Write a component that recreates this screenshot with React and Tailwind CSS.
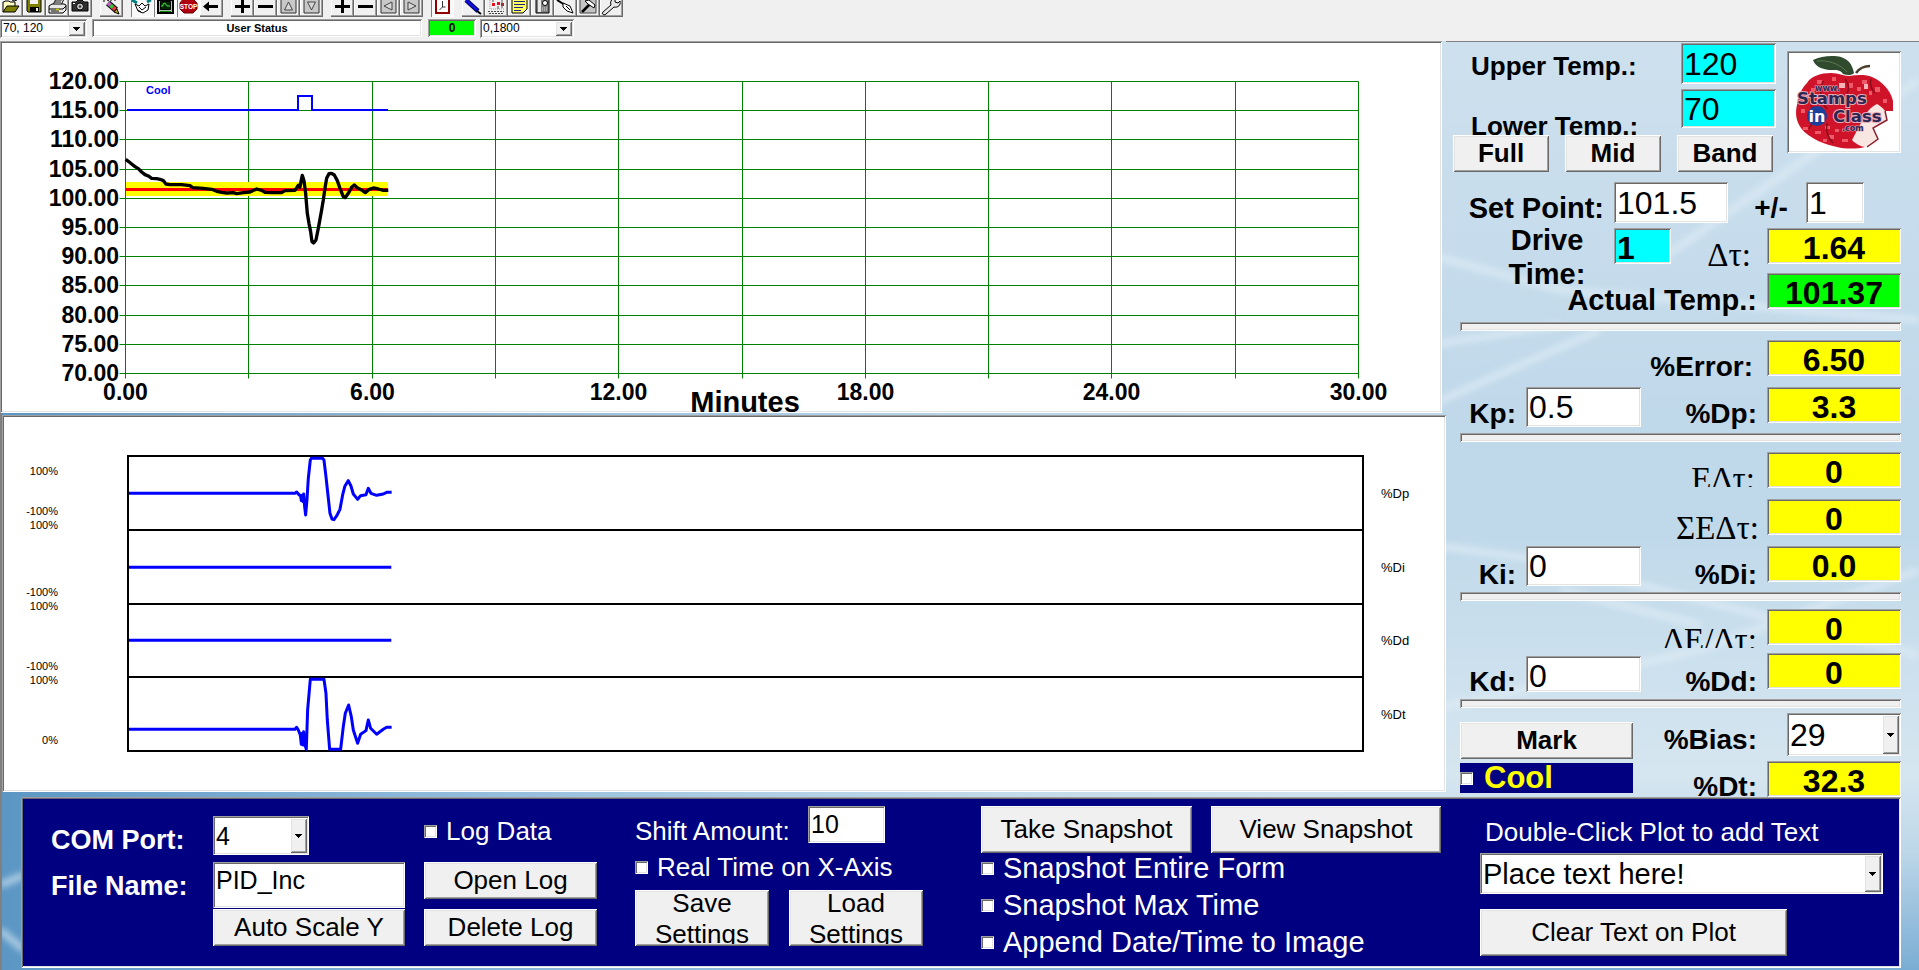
import React from "react";

const SUNKEN =
  "shadow-[inset_1px_1px_0_#a0a0a0,inset_-1px_-1px_0_#ffffff,inset_2px_2px_0_#696969,inset_-2px_-2px_0_#e3e3e3]";
const RAISED =
  "shadow-[inset_1px_1px_0_#ffffff,inset_-1px_-1px_0_#696969,inset_2px_2px_0_#e3e3e3,inset_-2px_-2px_0_#a0a0a0]";

/* ---------- basic controls ---------- */

function Button({ className = "", children }) {
  return (
    <button type="button" className={`bg-[#f0f0f0] text-black text-center overflow-hidden ${RAISED} ${className}`}>
      {children}
    </button>
  );
}

function TextBox({ id, value, label, className = "" }) {
  return (
    <input
      id={id}
      type="text"
      aria-label={label}
      defaultValue={value}
      className={`min-w-0 rounded-none px-[3px] text-black outline-none ${SUNKEN} ${className}`}
    />
  );
}

function Combo({ id, label, value, className = "", textClass = "", arrowClass = "w-[17px]" }) {
  return (
    <div className={`relative flex bg-white p-[2px] ${SUNKEN} ${className}`}>
      <select
        id={id}
        aria-label={label}
        defaultValue={value}
        className={`w-full appearance-none bg-transparent pl-[1px] text-black outline-none ${textClass}`}
      >
        <option>{value}</option>
      </select>
      <span
        className={`pointer-events-none absolute inset-y-[2px] right-[2px] flex items-center justify-center bg-[#f0f0f0] ${RAISED} ${arrowClass}`}
      >
        <svg viewBox="0 0 7 4" className="h-1 w-[7px]" shapeRendering="crispEdges">
          <path d="M0 0h7v1h-1v1h-1v1h-1v1h-1v-1h-1v-1h-1v-1h-1z" />
        </svg>
      </span>
    </div>
  );
}

function Check({ id, children, className = "" }) {
  return (
    <label htmlFor={id} className={`flex items-center gap-[9px] whitespace-nowrap ${className}`}>
      <input id={id} type="checkbox" className={`h-[13px] w-[13px] shrink-0 appearance-none bg-white ${SUNKEN}`} />
      {children}
    </label>
  );
}

function Readout({ id, color = "bg-[#ffff00]", children }) {
  return (
    <output
      id={id}
      className={`flex h-9 w-[134px] shrink-0 items-center justify-center pt-1 text-[32px] leading-8 font-bold ${color} ${SUNKEN}`}
    >
      {children}
    </output>
  );
}

function Divider() {
  return <div className={`mr-[18px] ml-[14px] h-[9px] bg-[#f0f0f0] ${SUNKEN}`} />;
}

/* ---------- toolbar ---------- */

const ICONS = {
  open: (
    <>
      <path d="M3 12V2h1l1-1h4l1 1h5v4" fill="#ffffc0" stroke="#000" />
      <path d="M3 12l4-6h12l-4 6z" fill="#808000" stroke="#000" />
      <path d="M12 0l2 1 3-1" fill="none" stroke="#000" />
    </>
  ),
  save: (
    <>
      <path d="M4 -2h14v14H5l-1-1z" fill="#808000" stroke="#000" />
      <path d="M7 -1h8v5H7z" fill="#f0f0f0" />
      <path d="M7 7h9v5H7z" fill="#000" />
      <path d="M13 8h2v3h-2z" fill="#f0f0f0" />
    </>
  ),
  print: (
    <>
      <path d="M7 5l3-6h8l-3 6" fill="#fff" stroke="#000" />
      <path d="M3 6l3-2h12l2 1v5l-3 3H3z" fill="#e8e8e8" stroke="#000" />
      <path d="M10 0h6M9 2h6M3 9h14l3-3M5 11h8" fill="none" stroke="#000" />
      <path d="M10 9.500h3" stroke="#cccc00" strokeWidth="1.500" />
    </>
  ),
  camera: (
    <>
      <path d="M3 2h4l2-2h4l2 2h4v9H3z" fill="#303030" stroke="#000" />
      <circle cx="11" cy="6.500" r="3.500" fill="#c8c8c8" stroke="#000" />
      <circle cx="11" cy="6.500" r="1.300" fill="#333" />
      <path d="M4 3h2v1H4z" fill="#fff" />
    </>
  ),
  crayon: (
    <>
      <path d="M4 0v2M7 0l2 1M11 0v1M14 0h2" stroke="#000" fill="none" />
      <path d="M8 3l8 7" stroke="#000" strokeWidth="6" />
      <path d="M8 3l2.500 2.200" stroke="#c060c0" strokeWidth="4" />
      <path d="M10.500 5.200l2.500 2.200" stroke="#40c040" strokeWidth="4" />
      <path d="M13 7.400l2.500 2.200" stroke="#e04040" strokeWidth="4" />
      <path d="M17 9l2 5-5-2z" fill="#c8b000" stroke="#000" />
    </>
  ),
  connect: (
    <>
      <path d="M1 0l5 3M20 0l-4 2" stroke="#008080" strokeWidth="3" />
      <path d="M4 4l3 7 5 2 5-3 1-6-4 2-3-3-3 3z" fill="#fff" stroke="#000" />
      <path d="M8 7l3 3 4-3M7 10l3 2" fill="none" stroke="#000" />
    </>
  ),
  scope: (
    <>
      <path d="M4 0h15v13H4z" fill="#b0c4b0" stroke="#000" strokeWidth="2" />
      <path d="M6.500 1.500h10v8h-10z" fill="#002800" stroke="#000" />
      <path d="M7 6h2V4l2-1 2 3h3" fill="none" stroke="#40e040" />
      <path d="M6 11.500h11" stroke="#008000" />
    </>
  ),
  stop: (
    <>
      <path d="M7-2h8l5 5v6l-4 4H7L3 9V3z" fill="#b00010" stroke="#700000" />
      <text x="11.500" y="9" textAnchor="middle" fontSize="6.500" fontWeight="700" fill="#fff">
        STOP
      </text>
    </>
  ),
  back: <path d="M3 6.500L9 1.500v3.500h9v3H9v3.500z" fill="#000" />,
  plus: <path d="M10 0h3v5h6v3h-6v5h-3V8H4V5h6z" fill="#000" />,
  minus: <path d="M4 5h15v3H4z" fill="#000" />,
  up: (
    <>
      <path d="M4-2h15v15H4z" fill="#c8c8c8" stroke="#303030" />
      <path d="M11.500 2l4 8h-8z" fill="#d8d8d8" stroke="#444" />
    </>
  ),
  down: (
    <>
      <path d="M4-2h15v15H4z" fill="#c8c8c8" stroke="#303030" />
      <path d="M11.500 10l4-8h-8z" fill="#d8d8d8" stroke="#444" />
    </>
  ),
  left: (
    <>
      <path d="M4-2h15v15H4z" fill="#c8c8c8" stroke="#303030" />
      <path d="M7 6l8-4v8z" fill="#d8d8d8" stroke="#444" />
    </>
  ),
  right: (
    <>
      <path d="M4-2h15v15H4z" fill="#c8c8c8" stroke="#303030" />
      <path d="M16 6L8 2v8z" fill="#d8d8d8" stroke="#444" />
    </>
  ),
  clock: (
    <>
      <path d="M5-1h13v14H5z" fill="#fff" stroke="#900000" strokeWidth="2" />
      <path d="M11.500 1v6l-3 3M11.500 7h3" fill="none" stroke="#333" />
    </>
  ),
  pen: (
    <>
      <path d="M4 0l12 11" stroke="#000060" strokeWidth="4.500" />
      <path d="M4 0l11 10" stroke="#1010e0" strokeWidth="2.500" />
      <path d="M15 11l4 3" stroke="#000" strokeWidth="2" />
    </>
  ),
  scatter: (
    <>
      <path d="M5 0v9h14" fill="none" stroke="#999" strokeDasharray="1 1" />
      <path d="M7 3h3v3H7zM12 2h3v3h-3zM16 3h3v3h-3z" fill="#e01020" />
      <path d="M8 0v2M17 0v8M13 6v3" stroke="#555" />
      <path d="M3 11.500h16M4 13.500h14" stroke="#444" strokeDasharray="2 1" />
    </>
  ),
  notes: (
    <>
      <path d="M4-1h15v10l-4 4H4z" fill="#ffff60" stroke="#000" />
      <path d="M6 1.500h11M6 4.500h11M6 7.500h9M6 10.500h7" stroke="#202080" />
    </>
  ),
  meter: (
    <>
      <path d="M5-1h13v14H5z" fill="#808080" stroke="#000" />
      <path d="M7 0h3v12H7z" fill="#e8e8e8" />
      <circle cx="14" cy="3" r="2.500" fill="#fff" stroke="#000" />
      <path d="M11 8h6M11 10h6" stroke="#ddd" strokeDasharray="1 1" />
    </>
  ),
  trowel: (
    <>
      <path d="M3 0l8 5" stroke="#000" strokeWidth="2" />
      <path d="M9 3l7 3 3 7-6-2-4-4z" fill="#fff" stroke="#000" />
      <path d="M12 6l4 4" stroke="#000" />
    </>
  ),
  hammer: (
    <>
      <path d="M3-1h16v14H3z" fill="#c4c4c4" stroke="#444" />
      <path d="M5 12l8-8" stroke="#000" strokeWidth="2.500" />
      <path d="M8 1l4-1 6 5-1 3-6-4z" fill="#fff" stroke="#000" />
    </>
  ),
  wrench: (
    <path
      d="M3 12l8-7c-1-3 0-5 2-6l2 0v3l3 1 2-2c1 4-2 7-6 6l-8 7c-2 2-5 0-3-2z"
      fill="#e8e8e8"
      stroke="#000"
    />
  ),
};

const GROUPS = [
  [["open", "Open"], ["save", "Save"], ["print", "Print"], ["camera", "Snapshot"]],
  [["crayon", "Macro"]],
  [["connect", "Connect", true], ["scope", "Plot", true], ["stop", "Stop", true], ["back", "Reset"]],
  [["plus", "Zoom Y in"], ["minus", "Zoom Y out"], ["up", "Shift up"], ["down", "Shift down"]],
  [["plus", "Zoom X in"], ["minus", "Zoom X out"], ["left", "Shift left"], ["right", "Shift right"]],
  [["clock", "Real time", true]],
  [
    ["pen", "Draw"],
    ["scatter", "Points"],
    ["notes", "Notes"],
    ["meter", "Meter"],
    ["trowel", "Clear"],
    ["hammer", "Configure"],
    ["wrench", "Tools"],
  ],
];

function Toolbar() {
  return (
    <header className="bg-[#f0f0f0]">
      <div className="flex gap-2">
        {GROUPS.map((group, i) => (
          <div key={i} className="flex">
            {group.map(([icon, name, pressed]) => (
              <button
                key={name}
                type="button"
                aria-label={name}
                aria-pressed={!!pressed}
                className={
                  pressed
                    ? "h-[17px] w-[23px] overflow-hidden bg-[#f8f8f8] shadow-[inset_1px_0_0_#808080,inset_-1px_-1px_0_#ffffff]"
                    : "h-[17px] w-[23px] overflow-hidden bg-[#f0f0f0] shadow-[inset_-1px_-1px_0_#696969,inset_-2px_-2px_0_#a0a0a0,inset_1px_0_0_#ffffff]"
                }
              >
                <svg viewBox="0 0 23 17" className="block h-[17px] w-[23px]">
                  {ICONS[icon]}
                </svg>
              </button>
            ))}
          </div>
        ))}
      </div>
      <div className="flex h-6 items-start pt-[2px]">
        <Combo label="Y range" value="70, 120" className="h-[19px] w-[87px]" textClass="pl-2 text-[12px] leading-[15px]" />
        <div
          className={`ml-[5px] flex h-[18px] w-[330px] items-center justify-center bg-white text-[11px] font-bold ${SUNKEN}`}
        >
          User Status
        </div>
        <div
          className={`ml-[6px] flex h-[18px] w-12 items-center justify-center bg-[#00ff00] text-[12px] font-bold ${SUNKEN}`}
        >
          0
        </div>
        <Combo label="X range" value="0,1800" className="ml-1 h-[19px] w-[94px]" textClass="text-[12px] leading-[15px]" />
      </div>
    </header>
  );
}

/* ---------- plots ---------- */

const TEMPERATURE =
  "377,298 385,304 395,312 405,320 415,326 425,336 435,344 445,348 455,355 470,356 480,358 490,362 498,372 510,374 545,374 570,377 578,383 610,385 635,388 650,394 665,397 680,399 700,398 710,401 730,398 750,396 770,387 785,391 795,397 815,398 845,398 855,392 885,391 890,384 895,376 900,382 903,365 907,346 912,362 917,400 922,460 927,490 932,515 936,545 941,549 948,540 956,500 965,450 970,420 975,385 980,355 987,341 995,340 1003,345 1012,362 1020,385 1030,410 1036,413 1045,400 1055,382 1063,375 1073,384 1085,390 1096,398 1108,388 1120,384 1135,387 1150,391 1165,391";
const DRIVE_P =
  "387,250 885,250 890,246 895,252 902,258 904,272 907,256 910,275 911,252 914,290 917,315 921,270 925,205 931,150 934,145 968,145 972,150 978,200 984,255 990,310 996,327 1002,329 1010,318 1020,298 1028,255 1035,228 1045,212 1053,228 1060,252 1073,268 1082,257 1098,254 1105,235 1113,250 1130,256 1150,252 1160,247 1175,247";
const DRIVE_T =
  "387,958 885,958 890,952 895,960 901,975 904,1003 907,970 909,1005 911,965 914,1000 919,1018 923,900 931,808 972,808 978,850 982,930 989,1018 1022,1018 1030,950 1036,910 1046,885 1054,920 1060,960 1073,1000 1082,973 1098,962 1105,930 1112,955 1130,973 1150,958 1160,952 1175,952";

const X0 = 125.5;
const X1 = 1358.5;
const Y0 = 81.5;
const Y1 = 373.5;

function TemperaturePlot() {
  const ys = Array.from({ length: 11 }, (_, i) => Math.round(Y0 - 0.5 + ((Y1 - Y0) * i) / 10) + 0.5);
  const xs = Array.from({ length: 11 }, (_, i) => Math.round(X0 - 0.5 + ((X1 - X0) * i) / 10) + 0.5);
  return (
    <div className={`mr-1 -ml-[2px] bg-white ${SUNKEN}`}>
      <svg viewBox="0 41 1442 372" className="block w-full" role="img" aria-label="Temperature plot">
        <g stroke="#008000" strokeWidth="1">
          {ys.map((y) => (
            <line key={y} x1={X0 - 6} x2={X1} y1={y} y2={y} />
          ))}
          {xs.map((x) => (
            <line key={x} x1={x} x2={x} y1={Y0} y2={Y1 + 5} />
          ))}
        </g>
        <rect x="126" y="182" width="262" height="14" fill="#ffff00" />
        <rect x="126" y="188" width="262" height="3" fill="#ff0000" />
        <polyline points="127,110 298,110 298,96 312,96 312,110 388,110" fill="none" stroke="#0000ff" strokeWidth="2" />
        <g transform="translate(0 60) scale(0.3333)">
          <polyline points={TEMPERATURE} fill="none" stroke="#000" strokeWidth="10" strokeLinejoin="round" />
        </g>
        <text x="146" y="94" className="fill-[#0000ff] text-[11px] font-bold">
          Cool
        </text>
        <g className="text-[23px] font-bold" fill="#000">
          {ys.map((y, i) => (
            <text key={y} x="119" y={y + 7.5} textAnchor="end">
              {(120 - i * 5).toFixed(2)}
            </text>
          ))}
          {[0, 2, 4, 6, 8, 10].map((i) => (
            <text key={i} x={xs[i]} y="400" textAnchor="middle">
              {(i * 3).toFixed(2)}
            </text>
          ))}
        </g>
        <text x="745" y="412" textAnchor="middle" className="text-[29px] font-bold">
          Minutes
        </text>
      </svg>
    </div>
  );
}

function DrivePlot() {
  const left = [
    ["100%", 475],
    ["-100%", 515],
    ["100%", 529],
    ["-100%", 596],
    ["100%", 610],
    ["-100%", 670],
    ["100%", 684],
    ["0%", 744],
  ];
  const right = [
    ["%Dp", 498],
    ["%Di", 572],
    ["%Dd", 645],
    ["%Dt", 719],
  ];
  return (
    <div className={`mt-[2px] bg-white ${SUNKEN}`}>
      <svg viewBox="2 415 1444 377" className="block w-full" role="img" aria-label="Drive plot">
        <rect x="128" y="456" width="1235" height="295" fill="none" stroke="#000" strokeWidth="2" />
        <path d="M128 530H1363M128 604H1363M128 677H1363" stroke="#000" strokeWidth="2" />
        <g transform="translate(0 410) scale(0.3333)" fill="none" stroke="#0000ff" strokeWidth="9" strokeLinejoin="round">
          <polyline points={DRIVE_P} />
          <path d="M387 472H1174M387 691H1174" />
          <polyline points={DRIVE_T} />
        </g>
        <g className="text-[11px]">
          {left.map(([t, y]) => (
            <text key={y} x="58" y={y} textAnchor="end">
              {t}
            </text>
          ))}
        </g>
        <g className="text-[13px]">
          {right.map(([t, y]) => (
            <text key={y} x="1381" y={y}>
              {t}
            </text>
          ))}
        </g>
      </svg>
    </div>
  );
}

/* ---------- side panel ---------- */

function AppleLogo() {
  return (
    <svg
      viewBox="0 0 114 102"
      className={`mt-2 h-[102px] w-[114px] bg-white ${SUNKEN}`}
      role="img"
      aria-label="Stamps in Class"
    >
      <path
        d="M20 32C24 25 34 22 44 22C52 22 56 25 62 25C70 24 78 23 85 26C95 30 104 40 106 50L106 60L98 60L90 54L78 68L66 90L78 96C70 98 58 98 50 96C40 94 22 88 14 77C9 70 8 62 10 54C11 46 14 38 20 32z"
        fill="#cf1329"
      />
      <path d="M90 53C84 56 78 62 75 70L65 89C70 94 76 97 80 95C86 94 90 92 91 88L86 77L100 69L98 60C95 56 92 54 90 53z" fill="#f8e6e2" />
      <path d="M98 60L100 69 86 77 91 88 80 96" fill="none" stroke="#8a2030" strokeWidth="1.500" />
      <g fill="#ee5a68">
        <path d="M30 29h5v4h-5zM45 26h4v4h-4zM62 32h4v5h-4zM75 29h5v4h-5zM88 36h5v5h-5zM19 44h4v3h-4zM16 76h5v3h-5zM28 80h6v3h-6zM42 84h5v4h-5zM55 88h6v3h-6zM38 75h5v3h-5zM52 58h4v3h-4zM14 58h4v4h-4zM96 48h4v4h-4zM38 36h4v3h-4zM70 36h4v4h-4zM82 40h3v4h-3zM24 37h4v3h-4zM48 78h4v3h-4zM36 88h4v3h-4z" />
      </g>
      <path
        d="M22 48q8 18 0 30M36 30q-6 16 4 28M40 72q-2 12 6 20M58 28q6 8 2 14M84 28q-2 8 4 14"
        fill="none"
        stroke="#8c0c1c"
        strokeWidth="1.500"
      />
      <path d="M52 32h6v5h-6zM77 33h4v5h-4z" fill="#f4b4b8" />
      <path d="M26 9C34 5 46 4 54 6C62 9 65 13 67 22C64 25 60 24 56 23C54 18 46 19 42 19C34 18 28 15 26 9z" fill="#2f4a2c" />
      <path d="M30 10C40 9 52 12 60 21" fill="none" stroke="#5f7a55" />
      <path d="M69 22Q74 15 83 15" fill="none" stroke="#4a4030" strokeWidth="2.500" />
      <circle cx="30" cy="65" r="10" fill="#1c3f9c" />
      <g fill="#2a2654" stroke="#e9aab6" strokeWidth="2" paintOrder="stroke" fontFamily="DejaVu Sans" fontWeight="700">
        <text x="28" y="40" fontSize="8" strokeWidth="1">
          www.
        </text>
        <text x="10" y="53" fontSize="16.500">
          Stamps
        </text>
        <text x="46" y="71" fontSize="16.500">
          Class
        </text>
        <text x="55" y="80" fontSize="8" strokeWidth="1">
          .com
        </text>
      </g>
      <text x="30" y="71" textAnchor="middle" fontSize="16" fontWeight="700" fill="#fff" fontFamily="DejaVu Sans">
        in
      </text>
    </svg>
  );
}

const ROW = "grid grid-cols-[80px_115px_1fr_134px] items-start pr-[18px]";
const LABEL = "text-right pr-[10px] whitespace-nowrap text-[28px] leading-8 font-bold";
const WIDE_LABEL = "text-right pr-[10px] whitespace-nowrap text-[29px] leading-8 font-bold";
const GREEK = "text-right whitespace-nowrap text-[33px] leading-8 font-['Liberation_Serif',serif]";

function SidePanel() {
  return (
    <aside className="w-[473px] shrink-0 shadow-[inset_0_1px_0_#808080]">
      <div className="flex justify-between pt-[2px] pr-[18px] pl-[7px]">
        <div className="w-[323px]">
          <div className="flex h-[46px] items-start justify-between pl-[18px]">
            <label htmlFor="upper" className="mt-2 text-[26px] leading-[30px] font-bold">
              Upper Temp.:
            </label>
            <TextBox id="upper" value="120" className="h-[41px] w-[95px] bg-[#00ffff] text-[32px]" />
          </div>
          <div className="flex h-[46px] items-start justify-between pl-[18px]">
            <label htmlFor="lower" className="mt-[22px] h-6 overflow-hidden text-[26px] leading-[30px] font-bold">
              Lower Temp.:
            </label>
            <TextBox id="lower" value="70" className="h-[39px] w-[95px] bg-[#00ffff] text-[32px]" />
          </div>
          <div className="mr-[3px] flex justify-between text-[26px] leading-7 font-bold">
            <Button className="h-[37px] w-24 pb-[2px]">Full</Button>
            <Button className="h-[37px] w-24 pb-[2px]">Mid</Button>
            <Button className="h-[37px] w-24 pb-[2px]">Band</Button>
          </div>
        </div>
        <AppleLogo />
      </div>

      <div className="mt-[10px] flex h-[46px] items-start">
        <label htmlFor="setpoint" className={`mt-[10px] w-[168px] ${WIDE_LABEL}`}>
          Set Point:
        </label>
        <TextBox id="setpoint" value="101.5" className="h-[41px] w-[114px] bg-white text-[32px]" />
        <label htmlFor="tolerance" className="mt-[10px] w-[78px] pl-2 text-center text-[28px] leading-8 font-bold">
          +/-
        </label>
        <TextBox id="tolerance" value="1" className="h-[41px] w-[58px] bg-white text-[32px]" />
      </div>
      <div className="flex h-[45px] items-start pr-[18px]">
        <label
          htmlFor="drivetime"
          className="-mt-[5px] ml-[49px] w-[104px] shrink-0 text-center text-[29px] leading-[34px] font-bold"
        >
          Drive Time:
        </label>
        <TextBox
          id="drivetime"
          value="1"
          className="ml-[15px] h-9 w-[57px] bg-[#00ffff] pt-1 text-[32px] font-bold"
        />
        <label htmlFor="dtau" className={`mt-[11px] flex-1 pr-4 ${GREEK}`}>
          Δτ:
        </label>
        <Readout id="dtau">1.64</Readout>
      </div>
      <div className="flex h-[49px] items-start pr-[18px]">
        <label htmlFor="actual" className={`mt-[11px] flex-1 ${WIDE_LABEL}`}>
          Actual Temp.:
        </label>
        <Readout id="actual" color="bg-[#00ff00]">
          101.37
        </Readout>
      </div>

      <Divider />
      <div className={`mt-[9px] h-[47px] ${ROW}`}>
        <div className={`col-span-3 mt-[11px] pr-1 ${LABEL}`}>
          <label htmlFor="err" className="mr-1">
            %Error:
          </label>
        </div>
        <Readout id="err">6.50</Readout>
      </div>
      <div className={`h-[46px] ${ROW}`}>
        <label htmlFor="kp" className={`mt-[11px] ${LABEL}`}>
          Kp:
        </label>
        <TextBox id="kp" value="0.5" className="h-10 w-full bg-white text-[32px]" />
        <label htmlFor="dp" className={`mt-[11px] ${LABEL}`}>
          %Dp:
        </label>
        <Readout id="dp">3.3</Readout>
      </div>

      <Divider />
      <div className={`mt-[10px] h-[47px] ${ROW}`}>
        <label htmlFor="edt" className={`col-span-3 mt-[11px] h-6 overflow-hidden pr-3 ${GREEK}`}>
          ΕΔτ:
        </label>
        <Readout id="edt">0</Readout>
      </div>
      <div className={`h-[47px] ${ROW}`}>
        <label htmlFor="sedt" className={`col-span-3 mt-[13px] pr-2 ${GREEK}`}>
          ΣΕΔτ:
        </label>
        <Readout id="sedt">0</Readout>
      </div>
      <div className={`h-[46px] ${ROW}`}>
        <label htmlFor="ki" className={`mt-[13px] ${LABEL}`}>
          Ki:
        </label>
        <TextBox id="ki" value="0" className="h-10 w-full bg-white text-[32px]" />
        <label htmlFor="di" className={`mt-[13px] ${LABEL}`}>
          %Di:
        </label>
        <Readout id="di">0.0</Readout>
      </div>

      <Divider />
      <div className={`mt-2 h-[44px] ${ROW}`}>
        <label htmlFor="dedt" className={`col-span-3 mt-[15px] h-6 overflow-hidden pr-[10px] ${GREEK}`}>
          ΔΕ/Δτ:
        </label>
        <Readout id="dedt">0</Readout>
      </div>
      <div className={`h-[46px] ${ROW}`}>
        <label htmlFor="kd" className={`mt-[13px] ${LABEL}`}>
          Kd:
        </label>
        <TextBox id="kd" value="0" className="mt-[3px] h-9 w-full bg-white pt-1 text-[32px]" />
        <label htmlFor="dd" className={`mt-[13px] ${LABEL}`}>
          %Dd:
        </label>
        <Readout id="dd">0</Readout>
      </div>

      <Divider />
      <div className="flex items-start justify-between pt-[5px] pr-[18px] pl-[14px]">
        <div className="flex w-[173px] flex-col gap-1 pt-[9px]">
          <Button className="h-[37px] pb-[2px] text-[26px] leading-7 font-bold">Mark</Button>
          <Check id="cool" className="h-[30px] gap-[11px] bg-[#000080] text-[31px] leading-[30px] font-bold text-[#ffff00]">
            Cool
          </Check>
        </div>
        <div className="flex-1">
          <div className="flex h-12 items-start">
            <label htmlFor="bias" className={`mt-[11px] w-[134px] ${LABEL}`}>
              %Bias:
            </label>
            <Combo id="bias" value="29" className="ml-5 h-[43px] flex-1" textClass="text-[32px] leading-[38px]" />
          </div>
          <div className="flex h-9 items-start">
            <label htmlFor="dt" className={`mt-[10px] w-[134px] ${LABEL}`}>
              %Dt:
            </label>
            <Readout id="dt">32.3</Readout>
          </div>
        </div>
      </div>
    </aside>
  );
}

/* ---------- bottom panel ---------- */

function StackedButton({ children }) {
  return (
    <Button className="h-14 w-[134px] px-4">
      <span className="block h-[52px] overflow-hidden">
        <span className="-mt-1 block">{children}</span>
      </span>
    </Button>
  );
}

function ControlPanel() {
  return (
    <section
      className={`relative mr-[18px] ml-[19px] grid h-[171px] grid-cols-[162fr_211fr_211fr_346fr_499fr_403fr] bg-[#000080] pt-[9px] pr-[18px] pl-[30px] text-[26px] leading-[30px] text-white ${SUNKEN}`}
    >
      <div className="flex flex-col gap-4 pt-[19px] text-[27px] font-bold whitespace-nowrap">
        <label htmlFor="com">COM Port:</label>
        <label htmlFor="file">File Name:</label>
      </div>

      <div className="pt-[10px] pr-[19px]">
        <Combo id="com" value="4" className="h-[39px] w-24" textClass="text-[25px] leading-[34px]" />
        <TextBox id="file" value="PID_Inc" className="mt-[7px] h-[46px] w-full bg-white pb-[10px] text-[25px]" />
        <Button className="mt-[1px] h-[37px] w-full pb-[2px]">Auto Scale Y</Button>
      </div>

      <div className="pt-[10px] pr-[38px]">
        <Check id="log" className="h-[30px]">
          Log Data
        </Check>
        <Button className="mt-4 h-[37px] w-full pb-[2px]">Open Log</Button>
        <Button className="mt-[10px] h-[37px] w-full pb-[2px]">Delete Log</Button>
      </div>

      <div className="pr-[58px]">
        <div className="flex h-[46px] items-start">
          <label htmlFor="shift" className="mt-[10px] w-[173px] whitespace-nowrap">
            Shift Amount:
          </label>
          <TextBox id="shift" value="10" className="h-[37px] w-[77px] bg-white text-[25px]" />
        </div>
        <Check id="realtime" className="h-[30px]">
          Real Time on X-Axis
        </Check>
        <div className="mt-2 flex justify-between leading-[31px]">
          <StackedButton>Save Settings</StackedButton>
          <StackedButton>Load Settings</StackedButton>
        </div>
      </div>

      <div className="pr-[39px]">
        <div className="flex justify-between">
          <Button className="h-[47px] w-[211px] pb-[2px]">Take Snapshot</Button>
          <Button className="h-[47px] w-[230px] pb-[2px]">View Snapshot</Button>
        </div>
        <div className="text-[29px] leading-[37px]">
          <Check id="entire" className="-mt-[3px] h-[37px]">
            Snapshot Entire Form
          </Check>
          <Check id="maxtime" className="h-[37px]">
            Snapshot Max Time
          </Check>
          <Check id="append" className="h-[37px]">
            Append Date/Time to Image
          </Check>
        </div>
      </div>

      <div className="pt-[11px]">
        <label htmlFor="plottext" className="block pl-[5px] whitespace-nowrap">
          Double-Click Plot to add Text
        </label>
        <Combo
          id="plottext"
          value="Place text here!"
          className="mt-[6px] h-[41px] w-full"
          textClass="text-[29px] leading-9"
        />
        <Button className="mt-[15px] h-[47px] w-[307px] pb-[2px]">Clear Text on Plot</Button>
      </div>
    </section>
  );
}

function Backdrop() {
  return (
    <svg
      aria-hidden="true"
      viewBox="0 0 1919 970"
      preserveAspectRatio="none"
      className="pointer-events-none absolute inset-0 h-full w-full"
    >
      <defs>
        <linearGradient id="sky" x1="0" x2="0" y1="0" y2="1">
          <stop offset="0" stopColor="#cfe1ee" />
          <stop offset="0.45" stopColor="#bfd8ea" />
          <stop offset="0.55" stopColor="#c0d9ea" />
          <stop offset="0.8" stopColor="#d6e6f0" />
          <stop offset="0.88" stopColor="#bcd6e8" />
          <stop offset="1" stopColor="#7aadd4" />
        </linearGradient>
        <linearGradient id="shade" x1="0" x2="1" y1="0" y2="0">
          <stop offset="0" stopColor="#5b96c4" />
          <stop offset="0.3" stopColor="#8fbbdc" stopOpacity="0.8" />
          <stop offset="0.7" stopColor="#c0d9ea" stopOpacity="0" />
        </linearGradient>
        <filter id="soft">
          <feGaussianBlur stdDeviation="3" />
        </filter>
      </defs>
      <rect width="1919" height="970" fill="url(#sky)" />
      <rect width="1919" height="970" fill="url(#shade)" />
      <g stroke="#e4f0f7" strokeOpacity="0.6" strokeWidth="7" fill="none" filter="url(#soft)">
        <path d="M1430 255L1560 290 1919 320M1660 260L1919 80M1430 345L1560 325M1430 405L1600 330M1430 545L1540 560 1919 655M1430 710L1700 650 1919 570M1560 590L1700 625M0 885L24 875M0 930L24 950" />
      </g>
    </svg>
  );
}

export default function App() {
  return (
    <div className="relative flex min-h-screen flex-col font-['Liberation_Sans',Arial,sans-serif] text-black">
      <Backdrop />
      <div className="relative">
        <Toolbar />
      </div>
      <main className="relative flex-1 border-l-2 border-[#808080]">
        <div className="flex">
          <div className="min-w-0 flex-1">
            <TemperaturePlot />
            <DrivePlot />
          </div>
          <SidePanel />
        </div>
        <ControlPanel />
      </main>
    </div>
  );
}
